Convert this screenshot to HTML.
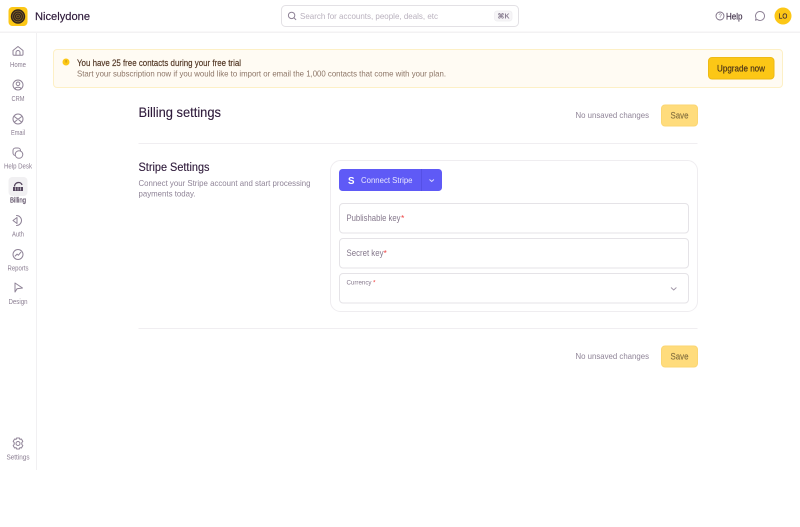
<!DOCTYPE html>
<html><head><meta charset="utf-8"><title>Billing settings</title>
<style>
html,body{margin:0;padding:0;background:#fff;width:800px;height:527px;overflow:hidden}
svg{display:block}
text{font-family:"Liberation Sans",sans-serif;white-space:pre}
.nav{font-size:7px;fill:#8a7d91}
.ic{fill:none;stroke:#8f8397;stroke-width:1;stroke-linecap:round;stroke-linejoin:round}
</style></head><body>
<svg width="800" height="527" viewBox="0 0 800 527" xmlns="http://www.w3.org/2000/svg">
<rect width="800" height="527" fill="#fff"/>
<!-- header -->
<rect x="0" y="31.5" width="800" height="1.5" fill="#f3f2f3"/>
<rect x="36" y="33" width="1" height="437" fill="#f1f0f2"/>
<rect x="8.5" y="7" width="19" height="19" rx="4" fill="#fcc716"/>
<circle cx="18" cy="16.5" r="7.2" fill="#35261c"/>
<circle cx="18" cy="16.5" r="5.4" fill="none" stroke="#8f6f28" stroke-width=".6"/>
<circle cx="18" cy="16.5" r="3.4" fill="none" stroke="#8f6f28" stroke-width=".6"/>
<circle cx="18" cy="16.5" r="1.4" fill="none" stroke="#8f6f28" stroke-width=".6"/>
<text x="35" y="20" font-size="11" fill="#2e1a3a" stroke="#2e1a3a" stroke-width=".15" textLength="55" lengthAdjust="spacingAndGlyphs">Nicelydone</text>
<!-- search -->
<rect x="281.5" y="5.5" width="237" height="21" rx="4" fill="#fff" stroke="#e3e1e5"/>
<circle cx="291.6" cy="15.4" r="3.2" class="ic"/><path d="M294 17.8l1.8 1.8" class="ic"/>
<text x="300" y="19" font-size="8.5" fill="#b9b1be" textLength="138" lengthAdjust="spacingAndGlyphs">Search for accounts, people, deals, etc</text>
<rect x="494.5" y="11" width="17.5" height="10" rx="2.5" fill="#f6f5f7" stroke="#eeedf0" stroke-width=".7"/>
<text x="497.5" y="18.7" font-size="7" font-weight="bold" fill="#8a7f92" textLength="12" lengthAdjust="spacingAndGlyphs">⌘K</text>
<circle cx="720" cy="16" r="4" fill="none" stroke="#7b6d83" stroke-width=".9"/>
<text x="718.5" y="18.2" font-size="6" fill="#7b6d83">?</text>
<text x="726" y="19.3" font-size="9" fill="#3f2f48" stroke="#3f2f48" stroke-width=".15" textLength="16.5" lengthAdjust="spacingAndGlyphs">Help</text>
<path d="M760 11.5a4.5 4.5 0 1 1-2.8 8l-1.7.7.6-2a4.5 4.5 0 0 1 3.900-6.700z" class="ic"/>
<circle cx="783" cy="16" r="8.5" fill="#fcc716"/>
<text x="778.8" y="18.7" font-size="7" fill="#33233d" stroke="#33233d" stroke-width=".15" textLength="8.500" lengthAdjust="spacingAndGlyphs">LO</text>
<!-- sidebar -->
<path d="M13 50.500l5-4 5 4v3.800a1 1 0 0 1-1 1H14a1 1 0 0 1-1-1z" class="ic"/><path d="M16 55v-2.500a2 2 0 0 1 4 0V55" class="ic"/>
<text x="18" y="67" text-anchor="middle" class="nav" textLength="16" lengthAdjust="spacingAndGlyphs">Home</text>
<circle cx="18" cy="85" r="5" class="ic"/><circle cx="18" cy="83.800" r="1.800" class="ic"/><path d="M15 88.800c.5-2 5.500-2 6 0" class="ic"/>
<text x="18" y="101" text-anchor="middle" class="nav" textLength="13" lengthAdjust="spacingAndGlyphs">CRM</text>
<circle cx="18" cy="119" r="5" class="ic"/><path d="M14.200 116.500l3.800 2.800 3.800-2.800M14.500 122l2.500-2M21.500 122l-2.500-2" class="ic"/>
<text x="18" y="135" text-anchor="middle" class="nav" textLength="14" lengthAdjust="spacingAndGlyphs">Email</text>
<rect x="13" y="148" width="7.500" height="7.500" rx="2.500" class="ic"/><circle cx="19" cy="154.500" r="3.800" class="ic" style="fill:#fff"/>
<text x="18" y="168.500" text-anchor="middle" class="nav" textLength="28" lengthAdjust="spacingAndGlyphs">Help Desk</text>
<rect x="8.500" y="177" width="19" height="19" rx="4" fill="#f1f0f2"/>
<path d="M13 191v-4h10v4z" fill="#55465e"/><path d="M14.500 186.500c0-4.500 6.500-5.500 7.500-1.500" fill="none" stroke="#55465e" stroke-width="1.300"/><path d="M15.500 187.300v3.200M18 187.300v3.200M20.500 187.300v3.200" stroke="#f1f0f2" stroke-width=".6"/>
<text x="18" y="202.500" text-anchor="middle" font-size="7" fill="#55465e" stroke="#55465e" stroke-width=".15" textLength="16" lengthAdjust="spacingAndGlyphs">Billing</text>
<path d="M13 220.500l4-3v6z" class="ic"/><path d="M16.500 215.500a5 5 0 1 1 0 10" class="ic"/>
<text x="18" y="236.500" text-anchor="middle" class="nav" textLength="12" lengthAdjust="spacingAndGlyphs">Auth</text>
<circle cx="18" cy="254.500" r="5" class="ic"/><path d="M15.200 256l1.900-1.900 1.300 1.100 2.400-2.900" class="ic"/>
<text x="18" y="270.500" text-anchor="middle" class="nav" textLength="21" lengthAdjust="spacingAndGlyphs">Reports</text>
<path d="M15 283l7.500 5-5.500.800-2 3.200z" class="ic"/>
<text x="18" y="304" text-anchor="middle" class="nav" textLength="19" lengthAdjust="spacingAndGlyphs">Design</text>
<circle cx="18" cy="443.500" r="2" class="ic"/><path d="M16.600 438h2.800l.5 1.400 1.500-.4 1.400 2.400-1 1.200v1.800l1 1.200-1.400 2.400-1.500-.4-.5 1.400h-2.800l-.5-1.400-1.500.4-1.400-2.400 1-1.200v-1.800l-1-1.200 1.400-2.400 1.500.4z" class="ic"/>
<text x="18" y="459.500" text-anchor="middle" class="nav" textLength="23" lengthAdjust="spacingAndGlyphs">Settings</text>
<!-- alert -->
<rect x="53.500" y="49.500" width="729" height="38" rx="3.500" fill="#fffbf3" stroke="#fdf0c6"/>
<circle cx="66" cy="62" r="3.500" fill="#fcc716"/><rect x="65.700" y="60" width=".7" height="2.600" fill="#a87c10"/>
<text x="77" y="66" font-size="8.800" fill="#4f3320" stroke="#4f3320" stroke-width=".15" textLength="164" lengthAdjust="spacingAndGlyphs">You have 25 free contacts during your free trial</text>
<text x="77" y="76.500" font-size="8.500" fill="#8d7667" textLength="369" lengthAdjust="spacingAndGlyphs">Start your subscription now if you would like to import or email the 1,000 contacts that come with your plan.</text>
<rect x="708.500" y="57.500" width="65.500" height="21.500" rx="3.500" fill="#fcc716" stroke="#eeba14"/>
<text x="717" y="71.500" font-size="9" fill="#4a3318" stroke="#4a3318" stroke-width=".18" textLength="48" lengthAdjust="spacingAndGlyphs">Upgrade now</text>
<!-- title row -->
<text x="138.500" y="117" font-size="14" fill="#2e1a3a" stroke="#2e1a3a" stroke-width=".12" textLength="82.500" lengthAdjust="spacingAndGlyphs">Billing settings</text>
<text x="575.500" y="118" font-size="8.500" fill="#8f8497" textLength="73.500" lengthAdjust="spacingAndGlyphs">No unsaved changes</text>
<rect x="661.500" y="105" width="36" height="21" rx="3.500" fill="#ffdc7c" stroke="#fbd672"/>
<text x="670.500" y="118.700" font-size="9" fill="#85703f" stroke="#85703f" stroke-width=".15" textLength="18" lengthAdjust="spacingAndGlyphs">Save</text>
<rect x="138.500" y="143" width="559" height="1" fill="#f0eef1"/>
<!-- stripe -->
<text x="138.500" y="171" font-size="11.500" fill="#2e1a3a" stroke="#2e1a3a" stroke-width=".12" textLength="71" lengthAdjust="spacingAndGlyphs">Stripe Settings</text>
<text x="138.500" y="186" font-size="8.500" fill="#8f8497" textLength="172" lengthAdjust="spacingAndGlyphs">Connect your Stripe account and start processing</text>
<text x="138.500" y="196.500" font-size="8.500" fill="#8f8497" textLength="57" lengthAdjust="spacingAndGlyphs">payments today.</text>
<rect x="330.500" y="160.500" width="367" height="151" rx="10" fill="#fff" stroke="#efedf0"/>
<rect x="339" y="169" width="103" height="22" rx="3.500" fill="#5f5af6"/>
<rect x="421" y="169" width="1" height="22" fill="#5550e6"/>
<text x="348" y="184" font-size="10.500" font-weight="bold" fill="#fff" textLength="6.500" lengthAdjust="spacingAndGlyphs">S</text>
<text x="361" y="183" font-size="8.500" fill="#e8e7fe" textLength="51.500" lengthAdjust="spacingAndGlyphs">Connect Stripe</text>
<path d="M429.500 179.500l2.200 2 2.200-2" fill="none" stroke="#dcdbfd" stroke-width="1"/>
<rect x="339.500" y="203.500" width="349" height="29.500" rx="3.500" fill="#fff" stroke="#e5e3e7"/>
<text x="346.500" y="221" font-size="8.800" fill="#85788c" textLength="54" lengthAdjust="spacingAndGlyphs">Publishable key</text>
<text x="401" y="221" font-size="8.500" fill="#ef4444">*</text>
<rect x="339.500" y="238.500" width="349" height="29.500" rx="3.500" fill="#fff" stroke="#e5e3e7"/>
<text x="346.500" y="256" font-size="8.800" fill="#85788c" textLength="37" lengthAdjust="spacingAndGlyphs">Secret key</text>
<text x="383.500" y="256" font-size="8.500" fill="#ef4444">*</text>
<rect x="339.500" y="273.500" width="349" height="29.500" rx="3.500" fill="#fff" stroke="#e5e3e7"/>
<text x="346.500" y="284.500" font-size="6.800" fill="#85788c" textLength="25" lengthAdjust="spacingAndGlyphs">Currency</text>
<text x="373" y="284.500" font-size="6.500" fill="#ef4444">*</text>
<path d="M671 287.500l2.700 2.500 2.700-2.500" fill="none" stroke="#9e94a5" stroke-width=".9"/>
<rect x="138.500" y="328" width="559" height="1" fill="#f0eef1"/>
<text x="575.500" y="359" font-size="8.500" fill="#8f8497" textLength="73.500" lengthAdjust="spacingAndGlyphs">No unsaved changes</text>
<rect x="661.500" y="346" width="36" height="21" rx="3.500" fill="#ffdc7c" stroke="#fbd672"/>
<text x="670.500" y="359.700" font-size="9" fill="#85703f" stroke="#85703f" stroke-width=".15" textLength="18" lengthAdjust="spacingAndGlyphs">Save</text>
</svg>
</body></html>
